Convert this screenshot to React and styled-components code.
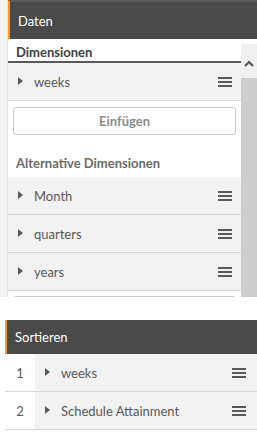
import React from 'react';
import styled, { createGlobalStyle } from 'styled-components';

const GlobalStyle = createGlobalStyle`
  body {
    margin: 0;
    background: #ffffff;
    font-family: Lato, "Liberation Sans", sans-serif;
  }
`;

const PAGE = styled.div`
  width: 257px;
  height: 434px;
  overflow: hidden;
  background: #ffffff;
`;

const DATAPANEL = styled.div`
  display: flex;
  height: 297px;
  overflow: hidden;
`;

const STRIP = styled.div`
  width: 7px;
  background: #f2f2f2;
  border-right: 1px solid #e2e2e2;
`;

const MAIN = styled.div`
  flex: 1;
  display: flex;
  flex-direction: column;
  min-width: 0;
`;

const HEADER = styled.div`
  display: flex;
  align-items: center;
  height: ${(p) => p.h}px;
  box-sizing: border-box;
  background: #4a4a4a;
  border-top: ${(p) => (p.top ? '2px solid #5c5c5c' : 'none')};
  border-left: 2px solid #f39b1a;
  padding-left: 8px;
  color: #ffffff;
  font-size: 13px;
`;

const BODY = styled.div`
  flex: 1;
  display: flex;
  min-height: 0;
`;

const LIST = styled.div`
  flex: 1;
  min-width: 0;
`;

const HEADING = styled.div`
  display: flex;
  align-items: flex-end;
  height: ${(p) => p.h}px;
  box-sizing: border-box;
  padding: ${(p) => (p.alt ? '0 8px 6px' : '0 8px 1px')};
  font-weight: 700;
  font-size: 13px;
  color: ${(p) => (p.alt ? '#6b6b6b' : '#404040')};
  border-bottom: ${(p) => (p.alt ? 'none' : '2px solid #595959')};
`;

const ROW = styled.div`
  display: flex;
  align-items: center;
  height: 38px;
  box-sizing: border-box;
  background: #f2f2f2;
  border-bottom: 1px solid #d9d9d9;
  padding: 0 9px 0 10px;
  color: #595959;
  font-size: 13px;
`;

const LABEL = styled.span`
  flex: 1;
  margin-left: 11px;
  white-space: nowrap;
`;

const ARROW = styled.span`
  width: 0;
  height: 0;
  border-top: 4px solid transparent;
  border-bottom: 4px solid transparent;
  border-left: 5px solid #595959;
  margin-top: -2px;
`;

const MENU = styled.span`
  display: flex;
  flex-direction: column;
  gap: 2px;
  span {
    display: block;
    width: 14px;
    height: 2px;
    background: #595959;
  }
`;

const BUTTONWRAP = styled.div`
  padding: ${(p) => (p.clipped ? '5px 5px 0' : '6px 5px 0')};
`;

const BUTTON = styled.button`
  display: block;
  width: 100%;
  height: 28px;
  border: 1px solid #cccccc;
  border-radius: 3px;
  background: #ffffff;
  color: #8c8c8c;
  font-family: inherit;
  font-weight: 700;
  font-size: 13px;
`;

const SCROLLBAR = styled.div`
  width: 16px;
  margin-top: 5px;
  display: flex;
  flex-direction: column;
`;

const SCROLLUP = styled.div`
  height: 34px;
  background: #f0f0f0;
  display: flex;
  justify-content: center;
  padding-top: 16px;
  box-sizing: border-box;
`;

const THUMB = styled.div`
  flex: 1;
  background: #cdcdcd;
`;

const SORTPANEL = styled.div`
  margin: 23px 0 0 5px;
`;

const SORTROW = styled.div`
  display: flex;
  height: 38px;
  box-sizing: border-box;
  border-bottom: 1px solid #d9d9d9;
`;

const NUM = styled.div`
  width: 30px;
  display: flex;
  align-items: center;
  justify-content: center;
  color: #595959;
  font-size: 13px;
`;

const SORTITEM = styled(ROW)`
  flex: 1;
  height: auto;
  border-bottom: none;
  padding: 0 11px 0 10px;
`;

const Menu = () => (
  <MENU>
    <span />
    <span />
    <span />
  </MENU>
);

const Item = ({ label }) => (
  <ROW>
    <ARROW />
    <LABEL>{label}</LABEL>
    <Menu />
  </ROW>
);

const App = () => {
  const alternatives = ['Month', 'quarters', 'years'];
  const sorting = ['weeks', 'Schedule Attainment'];

  return (
    <PAGE>
      <GlobalStyle />
      <DATAPANEL>
        <STRIP />
        <MAIN>
          <HEADER h={39} top>Daten</HEADER>
          <BODY>
            <LIST>
              <HEADING h={24}>Dimensionen</HEADING>
              <Item label="weeks" />
              <BUTTONWRAP>
                <BUTTON>Einfügen</BUTTON>
              </BUTTONWRAP>
              <HEADING h={42} alt>Alternative Dimensionen</HEADING>
              {alternatives.map((a) => (
                <Item key={a} label={a} />
              ))}
              {/* second insert button, scrolled mostly out of view */}
              <BUTTONWRAP clipped>
                <BUTTON aria-label="Einfügen" />
              </BUTTONWRAP>
            </LIST>
            <SCROLLBAR>
              <SCROLLUP>
                <svg width="10" height="7" viewBox="0 0 10 7">
                  <path d="M1 6 L5 2 L9 6" fill="none" stroke="#555555" strokeWidth="2.2" />
                </svg>
              </SCROLLUP>
              <THUMB />
            </SCROLLBAR>
          </BODY>
        </MAIN>
      </DATAPANEL>
      <SORTPANEL>
        <HEADER h={34}>Sortieren</HEADER>
        {sorting.map((s, i) => (
          <SORTROW key={s}>
            <NUM>{i + 1}</NUM>
            <SORTITEM>
              <ARROW />
              <LABEL>{s}</LABEL>
              <Menu />
            </SORTITEM>
          </SORTROW>
        ))}
      </SORTPANEL>
    </PAGE>
  );
};

export default App;
